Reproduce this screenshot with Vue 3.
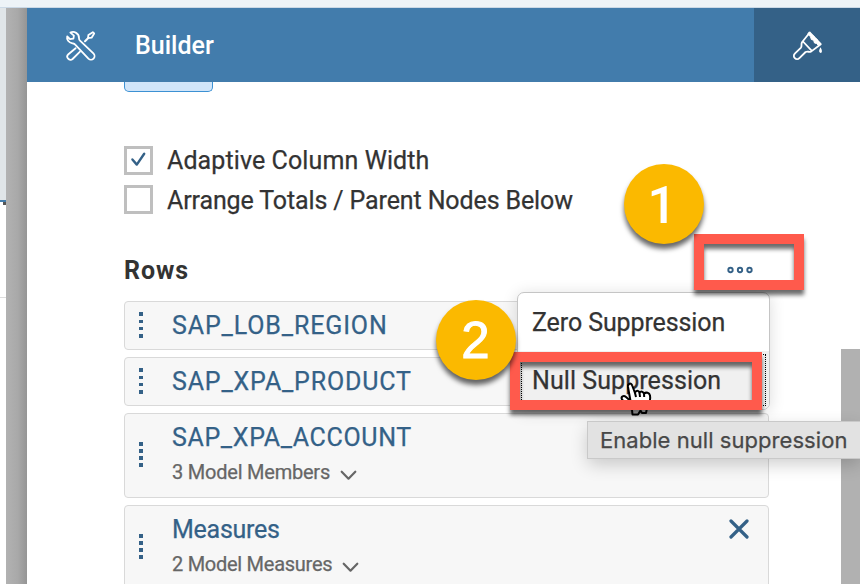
<script setup>
const options = [
  { label: 'Adaptive Column Width', checked: true, cls: 'adaptive' },
  { label: 'Arrange Totals / Parent Nodes Below', checked: false, cls: 'arrange' }
]
const rows = [
  { name: 'SAP_LOB_REGION', cls: 'region' },
  { name: 'SAP_XPA_PRODUCT', cls: 'product' },
  { name: 'SAP_XPA_ACCOUNT', cls: 'account', sub: '3 Model Members' },
  { name: 'Measures', cls: 'measures', sub: '2 Model Measures', closable: true }
]
</script>

<template>
  <div class="app">
    <div class="topline"></div>
    <div class="main">
      <div class="canvas-edge">
        <div class="canvas-head"></div>
        <div class="canvas-handle"></div>
        <div class="canvas-cell"></div>
      </div>
      <div class="gutter"></div>
      <section class="panel">
        <header class="header">
          <div class="builder-tab">
            <svg class="tools" width="32" height="32" viewBox="0 0 32 32" fill="none" stroke="#fff" stroke-width="1.8" stroke-linejoin="round" stroke-linecap="round">
              <path d="M5.4 2.6 C9 .8 14.2 3.2 14 8.2 C14 9.4 14.3 10 15 10.6 L28.4 23.4 A3.5 3.5 0 0 1 23.4 28.7 L10.2 14.6 C9.4 13.7 8.6 13.6 7.4 13.3 C3.6 12.4 1.4 9.6 2.2 6.4 L5 9.2 L8.4 8.6 L8.9 5.6 Z" />
              <path d="M10.6 18.2 L3.4 24.2 A3 3 0 0 0 7.6 29 L15 21.6" />
              <path d="M20 11.2 L23 8.2" stroke-width="2" /><path d="M23 8.2 L23.4 4.9 L27.8 2.2 L29.2 3.5 L26.6 7.7 Z" />
            </svg>
            <span class="title">Builder</span>
          </div>
          <div class="styling-tab">
            <svg width="32" height="32" viewBox="0 0 32 32" fill="none" stroke="#fff" stroke-width="1.8" stroke-linejoin="round" stroke-linecap="round">
              <path d="M10 12.2 L17.8 2.5 L28.8 14.2 L19 21.6 C17 22.4 15.6 21 13.6 22 L7.4 28.2 A3 3 0 0 1 2.8 23.6 L9 17.6 C10.2 15.8 8.8 14.4 10 12.2 Z M11 11.5 L19.6 20.6" />
              <path d="M17.5 2.2 L20 5 L21.7 6 L23.4 8.7 L25 9.2 L26 11.4 L29 13.9 L26.5 15.7 L24.6 13.5 L22.5 13 L21.6 10.2 L19.4 9.5 L18.4 6.5 L16 4.5 Z" fill="#fff" stroke-width="1" />
              <path d="M28.4 17.2 C29.5 19.2 30.3 20.4 29.8 22 C29.3 23.2 27.8 23.2 27.2 21.8 C26.8 20.3 27.7 19 28.4 17.2 Z" fill="#fff" stroke="none" />
            </svg>
          </div>
        </header>
        <div class="body">
          <div class="content">
            <div class="cut-button"></div>
            <div class="options">
              <label v-for="o in options" :key="o.label" class="option">
                <span class="box">
                  <svg v-if="o.checked" width="23" height="23" viewBox="0 0 23 23" fill="none" stroke="#346187" stroke-width="2.4" stroke-linecap="round" stroke-linejoin="round"><path d="M5.4 10.5 L9.8 15.6 L17.2 4.8" /></svg>
                </span>
                <span :class="['option-label', o.cls]">{{ o.label }}</span>
              </label>
            </div>
            <div class="section-head">
              <h2>Rows</h2>
              <svg class="more" width="28" height="10" viewBox="0 0 28 10" fill="none" stroke="#346187" stroke-width="1.9"><circle cx="4.5" cy="5" r="2.2" /><circle cx="14" cy="5" r="2.2" /><circle cx="23.5" cy="5" r="2.2" /></svg>
            </div>
            <div class="rows">
              <div v-for="r in rows" :key="r.name" :class="['row', { tall: r.sub }]">
                <div class="grip"><i></i><i></i><i></i><i></i></div>
                <div class="row-text">
                  <div :class="['name', r.cls]">{{ r.name }}</div>
                  <div v-if="r.sub" class="sub">
                    <span :class="r.cls + '-sub'">{{ r.sub }}</span>
                    <svg width="17" height="11" viewBox="0 0 17 11" fill="none" stroke="#666" stroke-width="2.2" stroke-linecap="round" stroke-linejoin="round"><path d="M1.7 1.7 L8.5 8.7 L15.3 1.7" /></svg>
                  </div>
                </div>
                <svg v-if="r.closable" class="close" width="20" height="20" viewBox="0 0 20 20" stroke="#346187" stroke-width="3.2" stroke-linecap="round"><path d="M2 2 L18 18 M18 2 L2 18" /></svg>
              </div>
            </div>
          </div>
          <div class="scroll"><div class="thumb"></div></div>
        </div>
      </section>
    </div>

    <div class="menu">
      <div class="menu-item"><span class="zero">Zero Suppression</span></div>
      <div class="menu-item active"><span class="null">Null Suppression</span></div>
    </div>
    <svg class="pointer" width="34" height="36" viewBox="0 0 34 36" fill="#fff" stroke="#000" stroke-width="2" stroke-linejoin="round">
      <path d="M11.5 20 L9 6 C8.5 2.5 12.2 1.2 13.2 4.5 L16 12 C17 9 19.7 9.3 20.5 11.7 C22 9.8 24.3 10.5 25 12.7 C27 10.8 30.5 11.5 31 14.5 C32 20 29.5 23 28 27 L27 32 L23 32 L21.5 29.5 L19 33.5 L13.5 33.5 L13 29 L7.5 24 L3 18.5 C1.5 15.5 4.7 14 7 16 L11.5 20" />
      <path d="M16 12 L17 16 M20.5 11.7 L21 16 M25 12.7 L25.2 16" fill="none" />
    </svg>
    <div class="tooltip"><span>Enable null suppression</span></div>
    <div class="frame frame-more"></div>
    <div class="frame frame-null"></div>
    <div class="badge badge-one"><svg width="80" height="80" viewBox="0 0 80 80"><path d="M30 25.5 C35.5 25 38.3 22.8 39.3 18.5" /><text class="one" x="38" y="55" text-anchor="middle">1</text></svg></div>
    <div class="badge badge-two"><svg width="80" height="80" viewBox="0 0 80 80"><text x="39.5" y="58.3" text-anchor="middle">2</text></svg></div>
  </div>
</template>

<style>
body { overflow: hidden; }
</style>

<style scoped>
.app { position: relative; width: 860px; height: 584px; overflow: hidden; display: flex; flex-direction: column; background: #fff; font-family: Roboto, "Liberation Sans", sans-serif; color: #333; -webkit-text-stroke: .25px currentColor; }
.app * { box-sizing: border-box; }
.topline { flex: 0 0 8px; background: #edf3f7; border-bottom: 1px solid #cbd9e6; }
.main { flex: 1; display: flex; min-height: 0; }
.canvas-edge { width: 6px; }
.canvas-head { height: 194px; background: #e0e5e8; border-bottom: 2px solid #427cac; }
.canvas-handle { width: 3px; height: 3px; margin-left: 3px; background: #555; }
.canvas-cell { height: 93px; border-bottom: 1px solid #ddd; }
.gutter { width: 21px; background: linear-gradient(90deg, #b2b2b2, #a9a9a9 55%, #959595); }
.panel { flex: 1; display: flex; flex-direction: column; min-width: 0; }
.header { flex: 0 0 74px; display: flex; background: #427cac; }
.builder-tab { flex: 1; display: flex; align-items: center; padding-left: 38px; }
.tools { margin-top: 1px; }
.title { margin-left: 38px; padding-top: 2px; color: #fff; font-size: 25px; line-height: 30px; font-weight: 500; white-space: nowrap; -webkit-text-stroke: 0; }
.styling-tab { width: 106px; padding: 1px 0 0 1px; background: #346187; display: flex; align-items: center; justify-content: center; }
.body { flex: 1; display: flex; min-height: 0; }
.content { width: 645px; margin-left: 97px; }
.scroll { width: 19px; margin-left: auto; padding-top: 267px; display: flex; }
.thumb { flex: 1; background: #b1b1b1; }
.cut-button { width: 89px; height: 10px; border: 1px solid #3c91d3; border-top: 0; border-radius: 0 0 5px 5px; background: #d1e5f9; }
.options { padding-top: 54px; display: flex; flex-direction: column; gap: 10px; }
.option { height: 29px; display: flex; align-items: center; gap: 14px; }
.box { width: 29px; height: 29px; border: 3px solid #bfbfbf; flex: none; }
.box svg { display: block; }
.option-label { font-size: 25px; line-height: 30px; white-space: nowrap; }
.adaptive { letter-spacing: .1px; }
.arrange { letter-spacing: -.12px; padding-top: 2px; }
.section-head { height: 87px; padding-top: 42px; display: flex; justify-content: space-between; }
h2 { margin: 0; font-size: 25px; line-height: 30px; font-weight: 700; letter-spacing: .9px; -webkit-text-stroke: 0; }
.more { margin: 9px 15px 0 0; }
.rows { display: flex; flex-direction: column; gap: 7px; }
.row { height: 49px; flex: none; border: 1px solid #d9d9d9; border-radius: 4px; background: #f7f7f7; display: flex; padding: 0 19px 0 14px; }
.row.tall { height: 85px; }
.grip { width: 4px; display: flex; flex-direction: column; justify-content: center; gap: 3.5px; padding-bottom: 1px; }
.tall .grip { padding-bottom: 2px; }
.grip i { width: 4px; height: 3.7px; background: #346187; }
.row-text { margin-left: 29px; padding-top: 9px; flex: 1; }
.name { font-size: 25px; line-height: 30px; color: #346187; white-space: nowrap; }
.region { letter-spacing: .87px; }
.product { letter-spacing: .82px; }
.account { letter-spacing: .65px; }
.measures { letter-spacing: -.25px; }
.sub { display: flex; align-items: center; gap: 10px; font-size: 20px; line-height: 26px; padding-top: 6px; color: #666; white-space: nowrap; letter-spacing: -.22px; }
.sub svg { margin-top: 6px; }
.measures-sub { letter-spacing: -.27px; }
.close { margin-top: 13px; flex: none; }
.menu { position: absolute; left: 517px; top: 292px; width: 253px; height: 118px; border: 1px solid #c5c5c5; border-radius: 7px; background: #fff; box-shadow: 0 2px 16px rgba(0,0,0,.14); overflow: hidden; font-size: 25px; line-height: 30px; white-space: nowrap; }
.menu-item { height: 58px; padding: 15px 0 0 14px; }
.menu-item.active { background: #f0f0f0; outline: 1px dotted #000; outline-offset: -4px; padding-top: 15px; }
.zero { letter-spacing: -.1px; }
.null { letter-spacing: .07px; }
.pointer { position: absolute; left: 619px; top: 381px; }
.tooltip { position: absolute; left: 588px; top: 422px; width: 272px; height: 36px; background: #e2e2e2; box-shadow: 0 0 0 1px #c9c9c9, 0 6px 18px rgba(0,0,0,.2); color: #484848; font-family: Inter, sans-serif; font-size: 22px; line-height: 37px; padding-left: 12px; white-space: nowrap; letter-spacing: .05px; }
.frame { position: absolute; border: 10px solid #ff5a4c; filter: drop-shadow(0 5px 2px rgba(0,0,0,.58)); }
.frame-more { left: 694px; top: 234px; width: 110px; height: 56px; }
.frame-null { left: 510px; top: 352px; width: 252px; height: 58px; }
.badge { position: absolute; width: 80px; height: 80px; border-radius: 50%; background: #fbb900; box-shadow: 0 5px 5px rgba(0,0,0,.6); }
.badge svg { display: block; }
.badge path { display: none; }
.badge text { fill: #fff; font-family: "Liberation Sans", sans-serif; font-size: 51px; stroke: #fff; stroke-width: 1px; }
.badge .one { font-family: Roboto, sans-serif; font-size: 51px; font-weight: 500; stroke-width: 0; transform: translateY(4px); }
.badge-one { left: 624px; top: 164px; }
.badge-two { left: 436px; top: 300px; }
</style>
